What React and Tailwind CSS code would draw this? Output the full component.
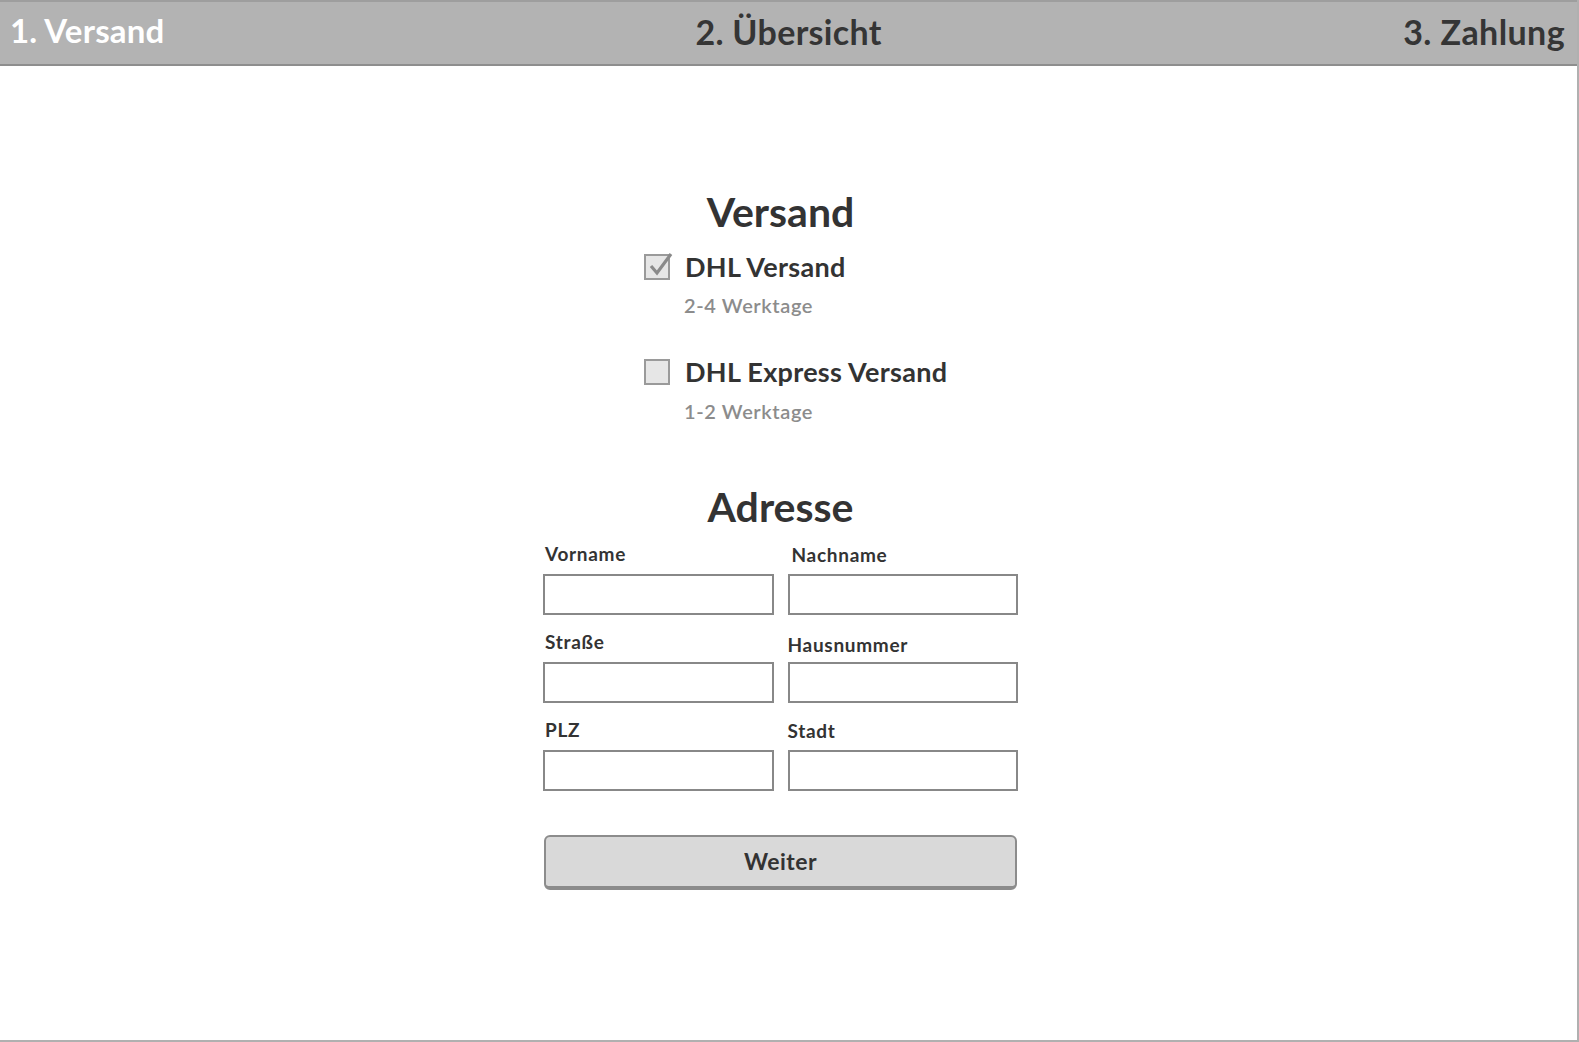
import React from "react";

function Check({ checked }) {
  return (
    <div className="relative w-[26px] h-[26px] shrink-0 border-2 border-[#9a9a9a] bg-[#e6e6e6]">
      {checked && (
        <svg className="absolute left-[2px] top-[-5px]" width="28" height="28" viewBox="0 0 28 28">
          <path d="M3 15 L9 22 L23 3" fill="none" stroke="#8a8a8a" strokeWidth="3.2" strokeLinejoin="miter" strokeLinecap="butt" />
        </svg>
      )}
    </div>
  );
}

function Field({ label, labelClass = "" }) {
  return (
    <div className="flex flex-col">
      <div className={"text-[19px] leading-[22px] font-bold tracking-[0.7px] text-[#333] " + labelClass}>{label}</div>
      <div className="mt-[9px] h-[41px] border-2 border-[#888] bg-white"></div>
    </div>
  );
}

export default function App() {
  return (
    <div className="w-[1579px] h-[1042px] bg-white border-r-2 border-b-2 border-[#b0b0b0] font-['Lato','Open_Sans',sans-serif] overflow-hidden">
      <div className="h-[66px] bg-[#b3b3b3] border-t-2 border-[#9e9e9e] border-b-2 border-b-[#8e8e8e] grid grid-cols-3 items-center px-[10px] pb-[4px]">
        <div className="text-[33px] font-bold text-white text-left tracking-[0.2px]">1. Versand</div>
        <div className="text-[34px] font-bold text-[#353535] text-center tracking-[0.3px]">2. Übersicht</div>
        <div className="text-[34px] font-bold text-[#353535] text-right pr-[2px] tracking-[0.4px]">3. Zahlung</div>
      </div>

      <div className="ml-[543px] w-[475px] flex flex-col">
        <h1 className="mt-[122px] text-[41px] leading-[48px] font-bold text-[#333] text-center">Versand</h1>

        <div className="ml-[101px] flex flex-col">
          <div className="mt-[15px] flex items-center gap-[15px] h-[32px]">
            <Check checked />
            <span className="text-[27px] font-bold text-[#333] tracking-[0.3px]">DHL Versand</span>
          </div>
          <div className="mt-[10px] ml-[40px] text-[20px] leading-[24px] font-semibold tracking-[0.6px] text-[#8c8c8c]">2-4 Werktage</div>

          <div className="mt-[39px] flex items-center gap-[15px] h-[32px]">
            <Check />
            <span className="text-[27px] font-bold text-[#333] tracking-[0.3px]">DHL Express Versand</span>
          </div>
          <div className="mt-[11px] ml-[40px] text-[20px] leading-[24px] font-semibold tracking-[0.6px] text-[#8c8c8c]">1-2 Werktage</div>
        </div>

        <h2 className="mt-[60px] text-[41px] leading-[48px] font-bold text-[#333] text-center">Adresse</h2>

        <div className="mt-[12px] grid grid-cols-2 gap-x-[14px] gap-y-[16px]">
          <Field label="Vorname" labelClass="pl-[2px]" />
          <Field label="Nachname" labelClass="pl-[4px] pt-[1px] -mb-[1px]" />
          <Field label="Straße" labelClass="pl-[2px]" />
          <Field label="Hausnummer" labelClass="pt-[3px] -mb-[3px]" />
          <Field label="PLZ" labelClass="pl-[2px]" />
          <Field label="Stadt" labelClass="pt-[1px] -mb-[1px]" />
        </div>

        <button className="mt-[44px] mx-[1px] h-[55px] rounded-[6px] bg-[#d9d9d9] border-2 border-b-[4px] border-[#8c8c8c] text-[23px] font-bold tracking-[0.5px] text-[#333]">
          Weiter
        </button>
      </div>
    </div>
  );
}
